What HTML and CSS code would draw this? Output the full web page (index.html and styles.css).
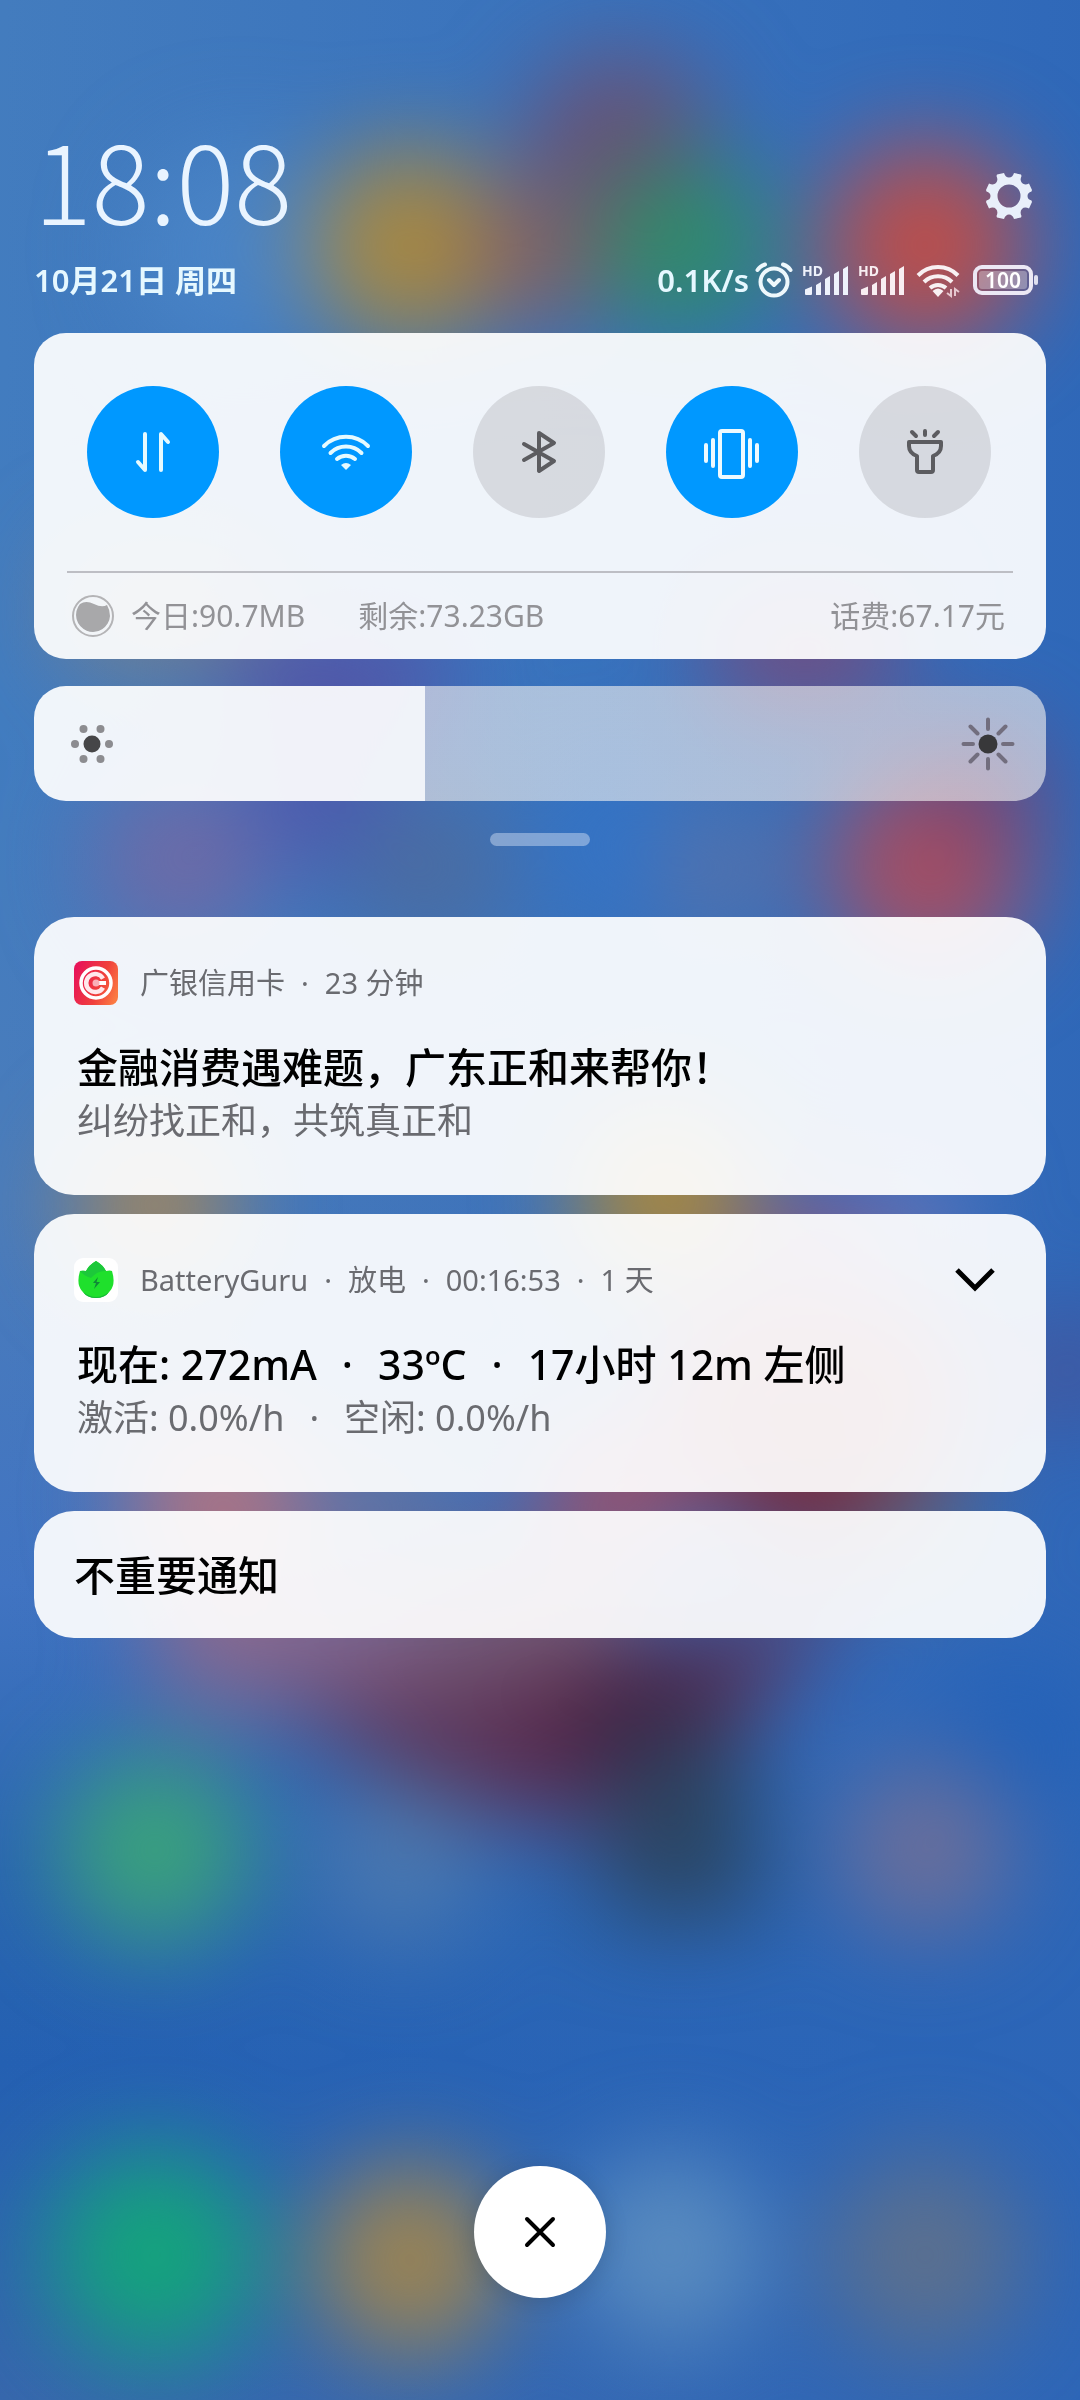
FILE: index.html
```html
<!DOCTYPE html>
<html lang="zh-CN">
<head>
<meta charset="utf-8">
<meta name="viewport" content="width=device-width, initial-scale=1">
<title>通知中心</title>
<link rel="stylesheet" href="styles.css">
</head>
<body>
<svg class="wallpaper" viewBox="0 0 1080 2400" preserveAspectRatio="none" aria-hidden="true">
  <defs>
    <linearGradient id="base" x1="0" y1="0" x2="0" y2="1">
      <stop offset="0" stop-color="#437cbe"/>
      <stop offset=".3" stop-color="#417cc0"/>
      <stop offset=".5" stop-color="#4a7cbb"/>
      <stop offset=".66" stop-color="#4174c2"/>
      <stop offset=".78" stop-color="#2a66b0"/>
      <stop offset=".86" stop-color="#2460b2"/>
      <stop offset="1" stop-color="#3767ad"/>
    </linearGradient>
    <linearGradient id="right" x1="0" y1="0" x2="1" y2="0">
      <stop offset="0" stop-color="#2f68ba" stop-opacity="0"/>
      <stop offset=".5" stop-color="#2f68ba" stop-opacity=".45"/>
      <stop offset="1" stop-color="#2d66b8" stop-opacity=".9"/>
    </linearGradient>
    <filter id="soft" x="-30%" y="-30%" width="160%" height="160%" color-interpolation-filters="sRGB"><feGaussianBlur stdDeviation="48"/></filter>
  </defs>
  <rect width="1080" height="2400" fill="url(#base)"/>
  <rect width="1080" height="2400" fill="url(#right)"/>
  <g filter="url(#soft)">
    <circle cx="240" cy="250" r="110" fill="#5490d0" opacity=".5"/>
    <circle cx="620" cy="150" r="95" fill="#704c6c" opacity=".9"/>
    <circle cx="410" cy="245" r="98" fill="#a88840"/>
    <circle cx="545" cy="260" r="65" fill="#845c64"/>
    <circle cx="685" cy="245" r="90" fill="#308a6a"/>
    <circle cx="925" cy="245" r="102" fill="#bc4e4a"/>
    <rect x="60" y="540" width="210" height="140" rx="40" fill="#a08468" opacity=".5"/>
    <rect x="230" y="620" width="220" height="110" rx="40" fill="#574fa2" opacity=".85"/>
    <rect x="710" y="590" width="190" height="120" rx="40" fill="#824672" opacity=".8"/>
    <circle cx="180" cy="860" r="85" fill="#7a66a0" opacity=".8"/>
    <circle cx="320" cy="800" r="70" fill="#4c58ae"/>
    <circle cx="430" cy="870" r="80" fill="#4b6ca0"/>
    <rect x="560" y="760" width="100" height="160" rx="40" fill="#2f74cc" opacity=".8"/>
    <circle cx="720" cy="870" r="60" fill="#5a72a8"/>
    <circle cx="930" cy="865" r="100" fill="#aa4e60"/>
    <circle cx="980" cy="790" r="60" fill="#7a4470"/>
    <circle cx="155" cy="1205" r="80" fill="#a08660"/>
    <circle cx="665" cy="1195" r="90" fill="#aa883e"/>
    <circle cx="810" cy="1240" r="60" fill="#7a5a90"/>
    <circle cx="915" cy="1220" r="50" fill="#6c78bc"/>
    <circle cx="1070" cy="1370" r="60" fill="#4a4f94" opacity=".8"/>
    <rect x="660" y="1300" width="300" height="200" rx="80" fill="#8c3a4a"/>
    <rect x="740" y="1430" width="150" height="130" rx="40" fill="#742c40"/>
    <circle cx="920" cy="1530" r="60" fill="#5e6878" opacity=".8"/>
    <circle cx="220" cy="1500" r="95" fill="#ac7484"/>
    <circle cx="390" cy="1490" r="60" fill="#68749c"/>
    <rect x="540" y="1430" width="150" height="120" rx="40" fill="#a05068"/>
    <rect x="150" y="1580" width="300" height="130" rx="60" fill="#86688f"/>
    <rect x="400" y="1560" width="240" height="120" rx="50" fill="#785a74"/>
    <path d="M260 1690L480 1690L860 1590L760 1700L650 1840L440 1800Z" fill="#5c2e50"/>
    <path d="M540 1700L700 1640L700 1760L600 1780Z" fill="#42183a"/>
    <path d="M620 1720L750 1740L760 1920H600Z" fill="#2a4460"/>
    <circle cx="1020" cy="1740" r="80" fill="#1f5fb8" opacity=".7"/>
    <circle cx="400" cy="1860" r="85" fill="#4a78b0"/>
    <circle cx="155" cy="1850" r="94" fill="#3aa27c"/>
    <circle cx="925" cy="1850" r="85" fill="#6c6f9a"/>
    <circle cx="155" cy="2255" r="104" fill="#14a47c"/>
    <circle cx="410" cy="2260" r="96" fill="#9c8452"/>
    <circle cx="670" cy="2250" r="96" fill="#5a8cc0"/>
    <circle cx="925" cy="2255" r="98" fill="#5c708e"/>
  </g>
</svg>

<main class="shade">
  <header class="top">
    <div class="top-row">
      <time class="clock" datetime="18:08">18:08</time>
      <button class="gear" type="button" aria-label="设置">
        <svg viewBox="-23 -23 46 46" width="46" height="46"><path fill="#e9effa" fill-rule="evenodd" d="M-12-21.500L-5-23Q-3.500-18.500 0-18.500T5-23L12-21.500L12.500-20Q10.500-15.500 13-13T20-12.500L23-6L22.500-4.500Q18.500-3.500 18.500 0T22.500 4.500L23 6L20 12.500Q15.500 10.500 13 13T12.500 20L12 21.500L5 23Q3.500 18.500 0 18.500T-5 23L-12 21.500L-12.500 20Q-10.500 15.500-13 13T-20 12.500L-23 6L-22.500 4.500Q-18.500 3.500-18.500 0T-22.500-4.500L-23-6L-20-12.500Q-15.500-10.500-13-13T-12.500-20ZM0-11.500A11.500 11.500 0 1 0 0 11.500A11.500 11.500 0 1 0 0-11.500Z"/></svg>
      </button>
    </div>
    <div class="top-row second">
      <p class="date">10月21日 周四</p>
      <div class="status">
        <span class="speed">0.1K/s</span>
        <svg class="alarm" viewBox="0 0 38 36" width="38" height="36" fill="none" stroke="#eef8fc" stroke-width="4" stroke-linecap="round" stroke-linejoin="round"><circle cx="19" cy="20" r="13.500"/><path d="M14 18l5 5 5-5M2.500 8Q5 4 10 2.500M35.500 8Q33 4 28 2.500"/></svg>
        <svg class="signal" viewBox="0 0 47 32" width="47" height="32" fill="#eef2fc"><text x="0" y="12" class="hd">HD</text><path d="M3 30v-4q0-1 1-1l6-2.500v7.500q0 1-1 1h-5q-1 0-1-1zM14 31v-10l5-3v13zM23 31v-16l5-3v19zM32 31v-21l5-3v24zM41 31v-26l5-3v29z"/></svg>
        <svg class="signal" viewBox="0 0 47 32" width="47" height="32" fill="#f8eef2"><text x="0" y="12" class="hd">HD</text><path d="M3 30v-4q0-1 1-1l6-2.500v7.500q0 1-1 1h-5q-1 0-1-1zM14 31v-10l5-3v13zM23 31v-16l5-3v19zM32 31v-21l5-3v24zM41 31v-26l5-3v29z"/></svg>
        <svg class="wifi" viewBox="0 0 44 34" width="44" height="34" fill="none" stroke="#f8f0f2" stroke-width="4"><path d="M2 12.500A28 28 0 0 1 42 12.500M8 19A20 20 0 0 1 36 19M14 25A12 12 0 0 1 30 25"/><path fill="#f8f0f2" stroke="none" d="M16.500 28Q22 23 27.500 28L22 34z"/><path stroke="#e6c8d0" stroke-width="2" d="M35 26v7l-4-3M39 33v-7l4 3"/></svg>
        <svg class="battery" viewBox="0 0 66 30" width="66" height="30"><rect x="2" y="2" width="56" height="26" rx="7" fill="none" stroke="#ece8f4" stroke-width="4"/><rect x="6" y="6" width="48" height="18" rx="3" fill="#fff" opacity=".3"/><rect x="61" y="10" width="4" height="10" rx="2" fill="#e0e0f0"/><text x="30" y="23" text-anchor="middle" class="level">100</text></svg>
      </div>
    </div>
  </header>

  <section class="card quick">
    <div class="toggles">
      <button class="toggle on" type="button" aria-label="移动数据" aria-pressed="true">
        <svg viewBox="0 0 48 48" width="48" height="48" fill="none" stroke="#e6faff" stroke-width="4" stroke-linecap="round" stroke-linejoin="round"><path d="M16 6v36l-7-8M32 42v-36l7 8"/></svg>
      </button>
      <button class="toggle on" type="button" aria-label="WLAN" aria-pressed="true">
        <svg viewBox="0 0 50 48" width="50" height="48" fill="none" stroke="#e6faff" stroke-width="4" stroke-linecap="round"><path d="M3 18A31 31 0 0 1 47 18M9.500 25A22 22 0 0 1 40.500 25M16 31A14 14 0 0 1 34 31"/><path fill="#e6faff" stroke="none" d="M20 37Q25 33 30 37L25.500 41.500q-.5.500-1 0z"/></svg>
      </button>
      <button class="toggle" type="button" aria-label="蓝牙" aria-pressed="false">
        <svg viewBox="0 0 48 48" width="48" height="48" fill="none" stroke="#5c5c60" stroke-width="4" stroke-linecap="round" stroke-linejoin="round"><path d="M9 16L39 33L24 43V5L39 15L9 32"/></svg>
      </button>
      <button class="toggle on" type="button" aria-label="振动" aria-pressed="true">
        <svg viewBox="0 0 56 56" width="56" height="56" fill="none" stroke="#eefaff" stroke-width="4" stroke-linecap="round"><rect x="16" y="7" width="23" height="46" rx="2"/><path d="M9 16v26M46 16v26M2 21v16M53 21v16"/></svg>
      </button>
      <button class="toggle" type="button" aria-label="手电筒" aria-pressed="false">
        <svg viewBox="0 0 48 48" width="48" height="48" fill="none" stroke="#5c5c60" stroke-width="4" stroke-linecap="round" stroke-linejoin="round"><path d="M8 14H40V18Q40 25 32 28V42Q32 44 30 44H18Q16 44 16 42V28Q8 25 8 18ZM24 3v4M11 4l4 4M37 4l-4 4"/></svg>
      </button>
    </div>
    <div class="usage">
      <svg viewBox="0 0 42 42" width="42" height="42"><circle cx="21" cy="21" r="20" fill="none" stroke="#b4b4b6" stroke-width="2"/><path d="M8 9Q14 5 22 9T35 10Q38 15 38 21A17 17 0 1 1 8 9Z" fill="#a8a8aa"/></svg>
      <span>今日:90.7MB</span>
      <span class="left">剩余:73.23GB</span>
      <span class="bill">话费:67.17元</span>
    </div>
  </section>

  <div class="brightness">
    <input type="range" min="0" max="1000" value="386" aria-label="亮度" style="--level: 38.6%">
    <svg class="dim" viewBox="-22 -22 44 44" width="44" height="44" fill="#8c8c90"><circle r="8.500" fill="#464648"/><circle cx="-17" r="4"/><circle cx="17" r="4"/><circle cx="-8.500" cy="-15" r="4"/><circle cx="8.500" cy="-15" r="4"/><circle cx="-8.500" cy="15" r="4"/><circle cx="8.500" cy="15" r="4"/></svg>
    <svg class="bright" viewBox="-28 -28 56 56" width="56" height="56" stroke="#726e7e" stroke-width="4" stroke-linecap="round"><circle r="9.500" fill="#38383a" stroke="none"/><path d="M0-15v-9.500M0 15v9.500M-15 0h-9.500M15 0h9.500M-10.500-10.500l-7-7M10.500-10.500l7-7M-10.500 10.500l-7 7M10.500 10.500l7 7"/></svg>
  </div>

  <div class="handle"></div>

  <section class="list">
    <article class="card note">
      <header class="source">
        <svg viewBox="0 0 44 44" width="44" height="44"><defs><linearGradient id="bank" x1="0" y1=".3" x2="1" y2=".7"><stop offset="0" stop-color="#e81458"/><stop offset=".6" stop-color="#f0403c"/><stop offset="1" stop-color="#fb7a42"/></linearGradient></defs><rect width="44" height="44" rx="8" fill="url(#bank)"/><circle cx="22" cy="22" r="15" fill="none" stroke="#fff" stroke-width="3.500"/><path d="M29 17.500A9 9 0 1 0 29 26.500" fill="none" stroke="#ffe9ec" stroke-width="4.500"/><path d="M32 22H22" stroke="#fff" stroke-width="4"/><circle cx="22" cy="22" r="3.500" fill="#f9b0b8"/></svg>
        <p>广银信用卡<span class="dot">·</span>23 分钟</p>
      </header>
      <h2>金融消费遇难题，广东正和来帮你！</h2>
      <p class="body">纠纷找正和，共筑真正和</p>
    </article>

    <article class="card note">
      <header class="source">
        <svg viewBox="0 0 44 44" width="44" height="44"><rect width="44" height="44" rx="9" fill="#fff"/><path d="M22 3Q29 7 32 13Q36 12 38 13Q42 26 36 33Q31 40 22 40T8 33Q2 26 6 13Q9 12 12 13Q15 7 22 3Z" fill="#1fe02c"/><path d="M12 13Q15 7 22 3Q29 7 32 13Q24 12 17 20Q10 18 6 13Z" fill="#1cc83a"/><path d="M9 34Q22 44 35 34Q31 40 22 40T9 34Z" fill="#16b838"/><path d="M24 19l-5 6h3l-2 6 6-7h-3.500z" fill="#108838"/></svg>
        <p>BatteryGuru<span class="dot">·</span>放电<span class="dot">·</span>00:16:53<span class="dot">·</span>1 天</p>
        <button class="expand" type="button" aria-label="展开"><svg viewBox="0 0 40 24" width="40" height="24" fill="none" stroke="#000" stroke-width="5"><path d="M2 2L20 20L38 2"/></svg></button>
      </header>
      <h2>现在: 272mA<span class="dot">·</span>33ºC<span class="dot">·</span>17小时 12m 左侧</h2>
      <p class="body">激活: 0.0%/h<span class="dot">·</span>空闲: 0.0%/h</p>
    </article>

    <article class="card folded"><h2>不重要通知</h2></article>
  </section>

  <button class="clear" type="button" aria-label="清除全部">
    <svg viewBox="0 0 32 32" width="32" height="32" stroke="#000" stroke-width="4" stroke-linecap="round"><path d="M3 3L29 29M29 3L3 29"/></svg>
  </button>
</main>
</body>
</html>
```
FILE: styles.css
```css
* {
  box-sizing: border-box;
  margin: 0;
}

body {
  position: relative;
  font-family: "Noto Sans", "Noto Sans CJK SC", sans-serif;
  background: #3a70b8;
}

svg {
  display: block;
  flex: none;
  overflow: visible;
}

button {
  display: grid;
  place-items: center;
  flex: none;
  padding: 0;
  border: 0;
  background: none;
}

.wallpaper {
  position: absolute;
  inset: 0;
  width: 100%;
  height: 100%;
  overflow: hidden;
}

.shade {
  position: relative;
  display: flex;
  flex-direction: column;
  min-height: 100vh;
  padding: 120px 34px 102px;
}

/* Clock, date and status icons */
.top {
  padding-bottom: 33px;
}

.top-row {
  display: flex;
  align-items: center;
  justify-content: space-between;
}

.second {
  margin-top: 24px;
}

.clock {
  font-family: "Noto Sans CJK SC", sans-serif;
  font-size: 108px;
  font-weight: 300;
  line-height: 116px;
  color: #e9f4ff;
}

.gear {
  margin: 36px 14px 0 0;
}

.date,
.speed {
  font-size: 31px;
  font-weight: 600;
  line-height: 40px;
  color: #e6f8ff;
}

.status {
  display: flex;
  align-items: center;
  padding-right: 7px;
}

.alarm {
  margin: 0 9px 0 6px;
}

.signal {
  margin-right: 9px;
}

.wifi {
  margin: 0 13px 0 2px;
}

.hd {
  font-size: 14px;
  font-weight: 700;
}

.level {
  font-size: 21px;
  font-weight: 600;
  fill: #fff;
}

/* Quick settings */
.card {
  border-radius: 40px;
  background: rgba(255, 255, 255, 0.92);
}

.quick {
  padding: 53px 33px 0;
  border-radius: 32px;
}

.toggles {
  display: flex;
  justify-content: space-between;
  padding: 0 22px 53px 20px;
  border-bottom: 2px solid #bdbec4;
}

.toggle {
  width: 132px;
  height: 132px;
  border-radius: 50%;
  background: rgba(90, 80, 85, 0.16);
}

.toggle.on {
  background: #0098ff;
}

.usage {
  display: flex;
  align-items: center;
  gap: 17px;
  height: 86px;
  padding: 0 8px 0 5px;
  font-size: 30px;
  line-height: 40px;
  color: #929296;
}

.left {
  margin-left: 36px;
}

.bill {
  margin-left: auto;
}

/* Brightness slider */
.brightness {
  position: relative;
  margin-top: 27px;
}

.brightness input {
  appearance: none;
  display: block;
  width: 100%;
  height: 115px;
  margin: 0;
  border-radius: 32px;
  background: linear-gradient(
    to right,
    rgba(255, 255, 255, 0.92) var(--level),
    rgba(240, 240, 240, 0.62) var(--level)
  );
}

.brightness input::-webkit-slider-thumb {
  appearance: none;
  width: 1px;
  height: 115px;
}

.dim,
.bright {
  position: absolute;
  top: 50%;
  transform: translateY(-50%);
  pointer-events: none;
}

.dim {
  left: 36px;
}

.bright {
  right: 30px;
}

.handle {
  align-self: center;
  width: 100px;
  height: 13px;
  margin: 32px 0 71px;
  border-radius: 7px;
  background: rgba(200, 215, 240, 0.5);
}

/* Notifications */
.list {
  display: grid;
  gap: 19px;
}

.note {
  height: 278px;
  padding: 44px 40px 0;
}

.source {
  display: flex;
  align-items: center;
  gap: 22px;
  height: 44px;
  font-size: 29px;
  line-height: 40px;
  color: #6a6b70;
}

.dot {
  margin: 0 16px;
}

.expand {
  margin: 0 11px 0 auto;
}

h2 {
  font-size: 41px;
  font-weight: 500;
  line-height: 56px;
  color: #000;
}

.note h2 {
  margin: 34px 0 0 3px;
}

h2 .dot,
.body .dot {
  margin: 0 25px;
}

.body {
  margin-left: 3px;
  font-size: 36px;
  line-height: 52px;
  color: #6a6b70;
}

.folded {
  padding: 36px 40px 35px;
}

.clear {
  align-self: center;
  width: 132px;
  height: 132px;
  margin-top: auto;
  border-radius: 50%;
  background: #fff;
  box-shadow: 0 4px 24px rgba(0, 0, 0, 0.14);
}
```
